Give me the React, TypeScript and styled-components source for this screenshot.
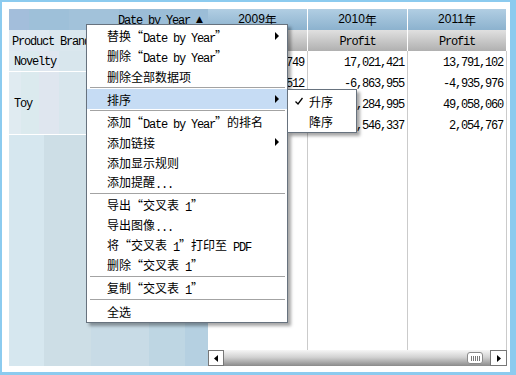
import React, { FC } from 'react'
import styled, { createGlobalStyle } from 'styled-components'

const GlobalStyle = createGlobalStyle`
  *, *::before, *::after {
    box-sizing: border-box;
  }
  html, body {
    margin: 0;
    padding: 0;
    background: #fff;
  }
  body {
    font-family: 'Noto Sans CJK SC', sans-serif;
    color: #000;
  }
`

const Frame = styled.div`
  position: relative;
  width: 516px;
  height: 375px;
  border-style: solid;
  border-color: #8ccbef;
  border-width: 2px 6px 3px 2px;
  padding: 7px 3px 6px 7px;
  background: #fff;
`

const Table = styled.div`
  display: flex;
  height: 100%;
`

const RowPane = styled.div`
  width: 199px;
  display: flex;
  flex-direction: column;
  background: linear-gradient(
    to right,
    #d6e7ef 0 35px,
    #cddee6 35px 82px,
    #c8dbe6 82px 140px,
    #bed6e3 140px 176px,
    #b5d0e1 176px
  );
`

const CornerTop = styled.div`
  height: 21px;
  display: flex;
  align-items: center;
  justify-content: flex-end;
  padding: 0 5px 1px 0;
  background: linear-gradient(
    to right,
    #a3bedb 0 20px,
    #9ec0d9 20px 60px,
    #a2c2da 60px 110px,
    #9bbdd7 110px
  );
`

const CornerBottom = styled.div`
  height: 21px;
  display: flex;
  align-items: center;
  padding: 0 0 1px 3px;
  background: linear-gradient(to right, #dfe9f1 0 40px, #dae7ee 40px 100px, #d6e5ec 100px);
`

const RowLabel = styled.div<{ $h: number }>`
  height: ${({ $h }) => $h}px;
  display: flex;
  align-items: center;
  padding: 0 0 2px 5px;
  border-bottom: 1px solid #fff;
  background: linear-gradient(
    to right,
    #e0ebf1 0 12px,
    #dbeaee 12px 30px,
    #dfe6ef 30px 50px,
    #d8e6ed 50px 110px,
    #d3e3ec 110px
  );
`

const SortMark = styled.span`
  font-size: 9px;
  margin-left: 6px;
  font-family: 'DejaVu Sans', sans-serif;
`

const DataPane = styled.div`
  flex: 1;
  display: flex;
  flex-direction: column;
  background: #fff;
`

const HeadRow = styled.div<{ $tone: 'blue' | 'gray' }>`
  display: flex;
  height: 21px;
  background: ${({ $tone }) =>
    $tone === 'blue' ? 'linear-gradient(#b1cee3, #8cb2ce)' : 'linear-gradient(#e0e0e0, #b0b0b0)'};
`

const HeadCell = styled.div<{ $w: number }>`
  width: ${({ $w }) => $w}px;
  border-right: 1px solid #fff;
  display: flex;
  align-items: center;
  justify-content: center;
  padding-bottom: 1px;
`

const Body = styled.div`
  flex: 1;
  display: flex;
`

const DataColumn = styled.div<{ $w: number }>`
  width: ${({ $w }) => $w}px;
  border-right: 1px solid #cbcbcb;
`

const Cell = styled.div`
  height: 21px;
  display: flex;
  align-items: center;
  justify-content: flex-end;
  padding: 0 3px 2px 0;
`

const Scrollbar = styled.div`
  height: 16px;
  display: flex;
  background: linear-gradient(#f6f6f6, #d2d2d2 45%, #a4a4a4 80%, #8a8a8a);
`

const ScrollButton = styled.div<{ $w: number }>`
  width: ${({ $w }) => $w}px;
  background: #fff;
  border: 1px solid #777;
  display: flex;
  align-items: center;
  justify-content: center;
`

const Track = styled.div`
  flex: 1;
  display: flex;
  align-items: center;
  justify-content: flex-end;
  padding-right: 7px;
`

const Thumb = styled.div`
  width: 16px;
  height: 12px;
  background: #fff;
  border: 1px solid #8a8a8a;
  border-radius: 3px;
  display: flex;
  align-items: center;
  justify-content: center;
  gap: 1px;
`

const Grip = styled.span`
  width: 1px;
  height: 5px;
  background: #777;
`

const Menu = styled.div`
  position: absolute;
  left: 84px;
  top: 22px;
  width: 202px;
  padding: 1px 0;
  background: #fff;
  border: 1px solid #67727e;
  box-shadow: 3px 3px 3px rgba(0, 0, 0, 0.35);
`

const SubMenu = styled(Menu)`
  left: 285px;
  top: 87px;
  width: 70px;
  padding: 1px 0;
`

const Item = styled.div<{ $active?: boolean; $indent?: number }>`
  position: relative;
  height: 20px;
  display: flex;
  align-items: center;
  padding-left: ${({ $indent }) => $indent ?? 20}px;
  background: ${({ $active }) => ($active ? '#c6dcf4' : 'transparent')};
`

const Label = styled.span`
  white-space: nowrap;
  line-height: 20px;
`

const Arrow = styled.span`
  position: absolute;
  right: 8px;
  top: 6px;
  width: 0;
  height: 0;
  border-top: 4px solid transparent;
  border-bottom: 4px solid transparent;
  border-left: 4px solid #000;
`

const Check = styled.svg`
  position: absolute;
  left: 7px;
  top: 6px;
`

const Separator = styled.div`
  height: 1px;
  margin: 1px 2px 1px 3px;
  background: #a3a3a3;
`

const Han = styled.span`
  font-family: 'Noto Sans CJK SC', sans-serif;
  font-size: 12px;
`

const Latin = styled.span<{ $shift?: boolean }>`
  position: relative;
  top: ${({ $shift }) => ($shift ? 1 : 0)}px;
  font-family: 'Liberation Mono', monospace;
  font-size: 12px;
  letter-spacing: -1.2px;
  white-space: pre;
`

const YearNum = styled.span`
  font-family: 'Liberation Sans', sans-serif;
  font-size: 12px;
`

const HAN = /[\u201c\u201d\u3000-\u9fff\uff00-\uffef]/

const Mixed: FC<{ text: string }> = ({ text }) => {
  const parts = text.match(/[\u201c\u201d\u3000-\u9fff\uff00-\uffef]+|[^\u201c\u201d\u3000-\u9fff\uff00-\uffef]+/g) ?? []
  const hasHan = HAN.test(text)
  return (
    <Label>
      {parts.map((p, i) =>
        HAN.test(p) ? (
          <Han key={i}>{p}</Han>
        ) : (
          <Latin key={i} $shift={hasHan}>
            {p}
          </Latin>
        )
      )}
    </Label>
  )
}

const columns = [
  { year: '2009', w: 100, values: ['11,586,749', '-2,047,512', '36,812,330', '4,218,906'] },
  { year: '2010', w: 100, values: ['17,021,421', '-6,863,955', '38,284,995', '5,546,337'] },
  { year: '2011', w: 99, values: ['13,791,102', '-4,935,976', '49,058,060', '2,054,767'] },
]

type Entry = { label: string; arrow?: boolean; active?: boolean } | 'sep'

const menuItems: Entry[] = [
  { label: '替换“Date by Year”', arrow: true },
  { label: '删除“Date by Year”' },
  { label: '删除全部数据项' },
  'sep',
  { label: '排序', arrow: true, active: true },
  'sep',
  { label: '添加“Date by Year”的排名' },
  { label: '添加链接', arrow: true },
  { label: '添加显示规则' },
  { label: '添加提醒...' },
  'sep',
  { label: '导出“交叉表 1”' },
  { label: '导出图像...' },
  { label: '将“交叉表 1”打印至 PDF' },
  { label: '删除“交叉表 1”' },
  'sep',
  { label: '复制“交叉表 1”' },
  'sep',
  { label: '全选' },
]

const TriLeft = () => (
  <svg width="4" height="7" viewBox="0 0 4 7">
    <path d="M4 0 L0 3.5 L4 7 Z" fill="#000" />
  </svg>
)

const TriRight = () => (
  <svg width="4" height="7" viewBox="0 0 4 7">
    <path d="M0 0 L4 3.5 L0 7 Z" fill="#000" />
  </svg>
)

export default function App() {
  return (
    <>
      <GlobalStyle />
      <Frame>
        <Table>
          <RowPane>
            <CornerTop>
              <Mixed text="Date by Year" />
              <SortMark>▲</SortMark>
            </CornerTop>
            <CornerBottom>
              <Mixed text="Product Brand" />
            </CornerBottom>
            <RowLabel $h={21}>
              <Mixed text="Novelty" />
            </RowLabel>
            <RowLabel $h={63}>
              <Mixed text="Toy" />
            </RowLabel>
          </RowPane>
          <DataPane>
            <HeadRow $tone="blue">
              {columns.map((c) => (
                <HeadCell key={c.year} $w={c.w}>
                  <YearNum>{c.year}</YearNum>
                  <Han>年</Han>
                </HeadCell>
              ))}
            </HeadRow>
            <HeadRow $tone="gray">
              {columns.map((c) => (
                <HeadCell key={c.year} $w={c.w}>
                  <Mixed text="Profit" />
                </HeadCell>
              ))}
            </HeadRow>
            <Body>
              {columns.map((c) => (
                <DataColumn key={c.year} $w={c.w}>
                  {c.values.map((v, i) => (
                    <Cell key={i}>
                      <Mixed text={v} />
                    </Cell>
                  ))}
                </DataColumn>
              ))}
            </Body>
            <Scrollbar>
              <ScrollButton $w={16}>
                <TriLeft />
              </ScrollButton>
              <Track>
                <Thumb>
                  <Grip />
                  <Grip />
                  <Grip />
                  <Grip />
                  <Grip />
                </Thumb>
              </Track>
              <ScrollButton $w={17}>
                <TriRight />
              </ScrollButton>
            </Scrollbar>
          </DataPane>
        </Table>

        <Menu>
          {menuItems.map((m, i) =>
            m === 'sep' ? (
              <Separator key={i} />
            ) : (
              <Item key={i} $active={m.active}>
                <Mixed text={m.label} />
                {m.arrow && <Arrow />}
              </Item>
            )
          )}
        </Menu>

        <SubMenu>
          <Item $indent={21}>
            <Check width="8" height="8" viewBox="0 0 8 8">
              <path d="M0.5 4.5 L3 7 L7.5 1" fill="none" stroke="#000" strokeWidth="1.3" />
            </Check>
            <Han>升序</Han>
          </Item>
          <Item $indent={21}>
            <Han>降序</Han>
          </Item>
        </SubMenu>
      </Frame>
    </>
  )
}
